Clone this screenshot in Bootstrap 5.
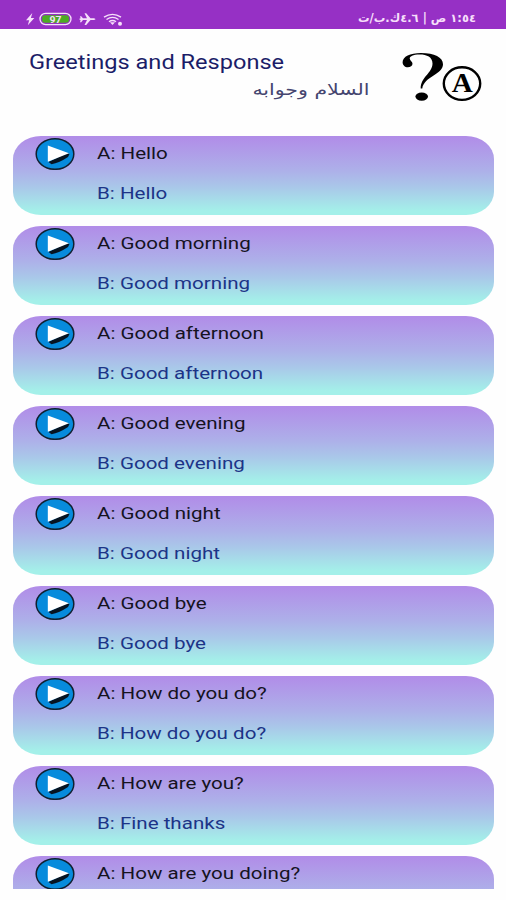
<!DOCTYPE html>
<html lang="en">
<head>
<meta charset="utf-8">
<meta name="viewport" content="width=device-width, initial-scale=1">
<title>Greetings and Response</title>
<link rel="stylesheet" href="https://cdn.jsdelivr.net/npm/bootstrap@5.3.0/dist/css/bootstrap.min.css">
<style>
body{font-family:Roboto,"Liberation Sans",sans-serif;background:#fefefe;height:900px;overflow:hidden}
.statusbar{height:29px;background:#9630c5;color:#f6dffa;padding:9px 30px 0 25px}
.clock{font:700 11.5px/18px "DejaVu Sans",sans-serif;transform-origin:right center}
.heading{height:107px;padding:0 22px 0 29px;color:#1b1d68}
.wide{display:inline-block;white-space:nowrap;transform:scaleX(1.21);transform-origin:left center}
.heading h1{font-size:20.5px;font-weight:400;line-height:24px;margin-top:21px}
.heading h1 .wide{transform:scaleX(1.15)}
.subtitle{font:16px/24px "DejaVu Sans",sans-serif;color:#45456f;margin-top:4px;width:340px}
.subtitle .wide{transform:scaleX(1.28);transform-origin:right center}
.phrases{height:753px;overflow:hidden;padding:0 12px 0 13px}
.phrase{height:79px;margin-bottom:11px;border-radius:28px/23px;background:linear-gradient(#b18ce8,#adb1e9 45%,#a9c9e9 66%,#a4f0e9 95%);font-size:17px;color:#15131f;padding-left:22px}
.phrase svg{margin-right:22px}
.line{height:39px;line-height:35px}
.reply{color:#1c3487;line-height:36px}
</style>
<script src="https://cdn.jsdelivr.net/npm/bootstrap@5.3.0/dist/js/bootstrap.bundle.min.js"></script>
</head>
<body>
<svg class="d-none"><defs><symbol id="play" viewBox="0 0 40 34">
<ellipse cx="20" cy="17" rx="18.8" ry="15.3" fill="#078bdc" stroke="#102030" stroke-width="1.5"/>
<path d="M13.5 25 16.5 27.3Q24 26 33 20L34.5 17 32 16Z" fill="#071421"/><path d="M12.8 8.6 34 16.2 12.8 24.8Z" fill="#fff"/>
</symbol></defs></svg>
<header class="statusbar d-flex justify-content-between">
<svg width="100" height="20" viewBox="25 9 100 20" fill="#f6dffa">
<path d="M32.3 13 26 20.2H29.2L27.8 25.2 34.3 18H30.9Z"/>
<rect x="40" y="13.4" width="31" height="11.2" rx="5.6" fill="none" stroke="#f6dffa" stroke-width="1.3"/><rect x="42" y="15.2" width="27" height="7.6" rx="3" fill="#4daa24"/>
<text x="49.5" y="22.5" font-family="Roboto" font-size="9.5" font-weight="700" textLength="12" lengthAdjust="spacingAndGlyphs">97</text>
<path d="M79 19 80.6 18.2 80 16.2H81.2L83 18.3H87L84.5 13.2H86.2L90.5 18.3H94Q97 19.2 94 20.1H90.5L86.2 25H84.5L87 20.1H83L81.2 22.2H80L80.6 20.2Z"/>
<g fill="none" stroke="#f6dffa" stroke-width="1.4"><path d="M104 17.2Q112.5 11.5 121 17.2M106.5 19.5Q112.5 15.3 118.5 19.5M109 21.8Q112.5 19.2 116 21.8"/></g><path d="M110 22.2H115L112.5 25Z"/><circle cx="120" cy="23.8" r="2"/>
</svg>
<span class="clock" dir="rtl">١:٥٤ ص | ٤.٦ك.ب/ت</span>
</header>
<section class="heading d-flex justify-content-between">
<div><h1 class="mb-0"><span class="wide">Greetings and Response</span></h1>
<div class="subtitle" dir="rtl"><span class="wide">السلام وجوابه</span></div></div>
<svg class="flex-shrink-0" width="84" height="60" viewBox="400 48 84 60" style="margin-top:19px">
<path d="M420.7 88.5C420.7 77 432.5 73 432.5 63.5C432.5 57 427 54.4 419.5 54.4C413 54.4 409.5 56.4 409.7 58.6C410 61 412.5 61.6 412.5 63.8C412.5 66 410.3 67.3 407.8 67.3C404.8 67.3 402.6 65.2 402.6 62.3C402.6 56.6 410 53 421 53C434.5 53 443 57.3 443 64.3C443 74.5 424 76.5 422.3 88.5Z"/><ellipse cx="421.7" cy="96.6" rx="6.3" ry="4.1"/>
<ellipse cx="462" cy="83.6" rx="18.2" ry="16.3" fill="none" stroke="#000" stroke-width="2.4"/>
<text x="451.8" y="92" font-family="Liberation Serif" font-size="28" font-weight="700" textLength="21" lengthAdjust="spacingAndGlyphs">A</text>
</svg>
</section>
<main class="phrases" id="phrases"></main>
<script>
const phrases=[["Hello","Hello"],["Good morning","Good morning"],["Good afternoon","Good afternoon"],["Good evening","Good evening"],["Good night","Good night"],["Good bye","Good bye"],["How do you do?","How do you do?"],["How are you?","Fine thanks"],["How are you doing?"]];
document.getElementById("phrases").innerHTML=phrases.map(([a,b])=>`<article class="phrase d-flex"><svg width="40" height="34" class="flex-shrink-0"><use href="#play" y="1"/></svg><div><div class="line"><span class="wide">A: ${a}</span></div>${b?`<div class="line reply"><span class="wide">B: ${b}</span></div>`:""}</div></article>`).join("");
</script>
</body>
</html>
